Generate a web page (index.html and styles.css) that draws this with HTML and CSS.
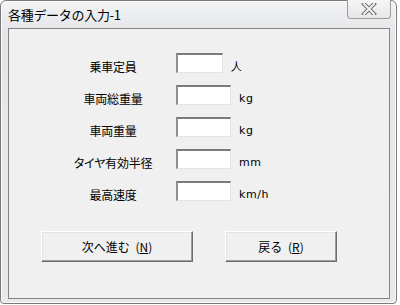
FILE: index.html
```html
<!DOCTYPE html>
<html lang="ja">
<head>
    <meta charset="UTF-8">
    <title>各種データの入力-1</title>
    <link rel="stylesheet" href="styles.css">
</head>
<body>
    <div class="window">
        <!-- タイトルバー -->
        <div class="titlebar">
            <span class="title">各種データの入力-1</span>
            <div class="close-btn">
                <svg width="16" height="12" viewBox="0 0 16 12">
                    <path d="M3 1 L13 11 M13 1 L3 11" stroke="#6c6c6c" stroke-width="4" stroke-linecap="square"/>
                    <path d="M3 1 L13 11 M13 1 L3 11" stroke="#f4f4f4" stroke-width="2" stroke-linecap="square"/>
                </svg>
            </div>
        </div>

        <!-- 入力エリア -->
        <div class="client">
            <div class="form">
                <span class="label">乗車定員</span>
                <div class="entry">
                    <span class="field short"></span>
                    <span class="unit">人</span>
                </div>

                <span class="label">車両総重量</span>
                <div class="entry">
                    <span class="field"></span>
                    <span class="unit">kg</span>
                </div>

                <span class="label">車両重量</span>
                <div class="entry">
                    <span class="field"></span>
                    <span class="unit">kg</span>
                </div>

                <span class="label">タイヤ有効半径</span>
                <div class="entry">
                    <span class="field"></span>
                    <span class="unit">mm</span>
                </div>

                <span class="label">最高速度</span>
                <div class="entry">
                    <span class="field"></span>
                    <span class="unit">km/h</span>
                </div>
            </div>

            <div class="buttons">
                <button class="btn btn-next">次へ進む&nbsp;(<u>N</u>)</button>
                <button class="btn btn-back">戻る&nbsp;(<u>R</u>)</button>
            </div>
        </div>
    </div>
</body>
</html>
```

FILE: styles.css
```css
body {
    margin: 0;
    padding: 0;
    background: #ffffff;
    font-family: "Noto Sans CJK JP", "DejaVu Sans", sans-serif;
    color: #000;
}

/* ウィンドウ枠 */
.window {
    width: 397px;
    height: 304px;
    box-sizing: border-box;
    border: 1px solid #7a7a7a;
    border-radius: 6px 6px 4px 4px;
    background: linear-gradient(#f3f4f6, #e4e6e9 30px, #e8e9eb);
    box-shadow: inset 0 0 0 1px #fbfbfb;
    display: flex;
    flex-direction: column;
}

/* タイトルバー */
.titlebar {
    height: 27px;
    display: flex;
    align-items: flex-start;
    padding-left: 7px;
}

.title {
    font-size: 13px;
    line-height: 28px;
    letter-spacing: -0.3px;
}

.close-btn {
    margin-left: auto;
    margin-right: 5px;
    margin-top: -1px;
    width: 44px;
    height: 19px;
    box-sizing: border-box;
    border: 1px solid #9a9a9a;
    border-top: none;
    border-radius: 0 0 4px 4px;
    background: linear-gradient(#f6f6f6, #e6e6e6);
    display: flex;
    align-items: center;
    justify-content: center;
}

/* クライアント領域 */
.client {
    flex: 1;
    margin: 0 6px 4px 7px;
    border: 1px solid #858585;
    background: #f0f0f0;
}

.form {
    display: grid;
    grid-template-columns: 120px 1fr;
    row-gap: 8px;
    padding: 24px 0 0 47px;
}

.label {
    font-size: 12px;
    line-height: 20px;
    padding-top: 4px;
    text-align: center;
    margin-right: 6px;
    letter-spacing: -0.2px;
    font-feature-settings: "palt";
}

.entry {
    display: flex;
    align-items: flex-start;
}

.field {
    width: 55px;
    height: 20px;
    box-sizing: border-box;
    background: #fff;
    border-top: 2px solid #7b7b7b;
    border-left: 2px solid #8f8f8f;
    border-right: 1px solid #e3e3e3;
    border-bottom: 1px solid #e3e3e3;
}

.field.short {
    width: 47px;
}

.unit {
    font-family: "DejaVu Sans", sans-serif;
    font-size: 11px;
    line-height: 20px;
    padding-top: 4px;
    padding-left: 8px;
    letter-spacing: 0.6px;
}

/* ボタン */
.buttons {
    display: flex;
    gap: 32px;
    padding: 26px 0 0 32px;
}

.btn {
    height: 31px;
    box-sizing: border-box;
    background: #f0f0f0;
    border: 1px solid;
    border-color: #ffffff #6b6b6b #6b6b6b #ffffff;
    box-shadow: inset -1px -1px 0 #a0a0a0, inset 1px 1px 0 #e3e3e3;
    font-family: "Noto Sans CJK JP", sans-serif;
    font-size: 12px;
    color: #000;
    padding: 0;
    word-spacing: 3px;
}

.btn-next {
    width: 152px;
}

.btn-back {
    width: 112px;
}
```
